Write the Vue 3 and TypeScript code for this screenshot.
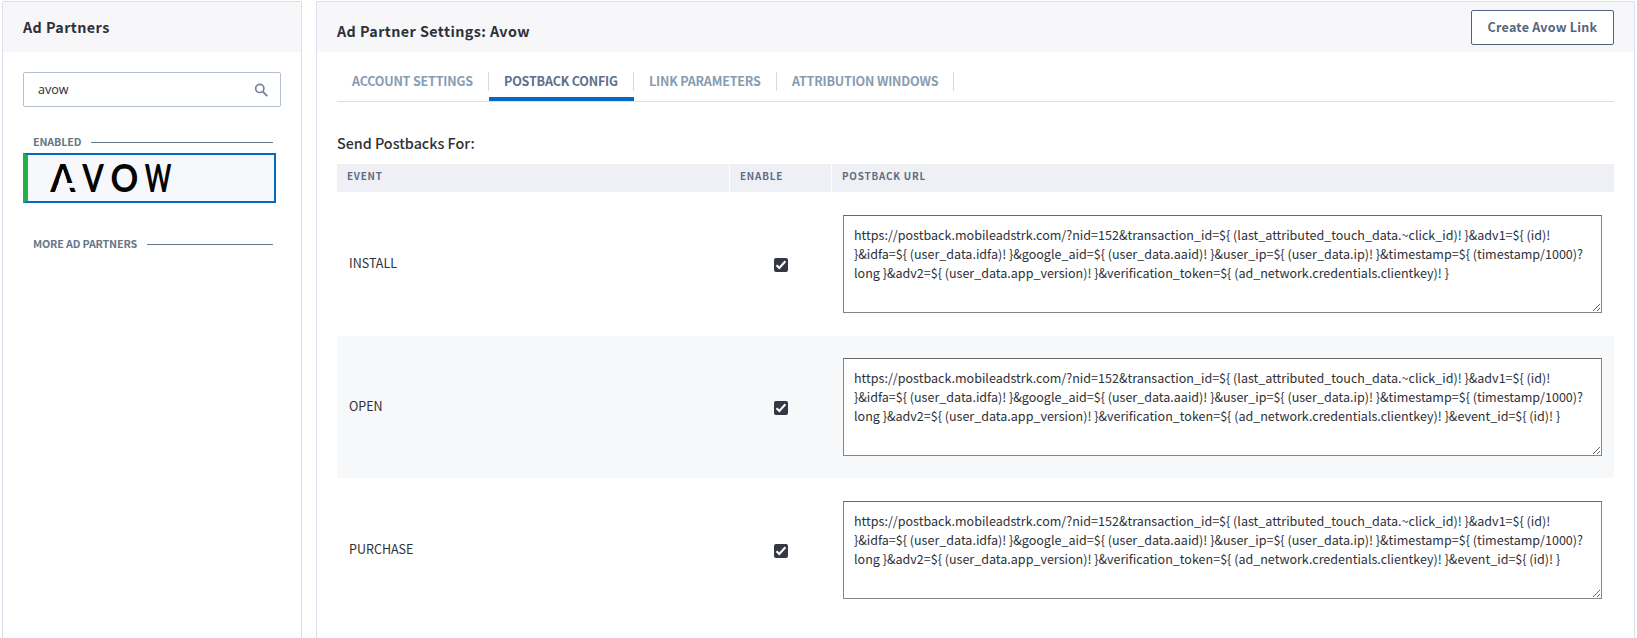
<script setup lang="ts">
import { ref } from 'vue'

interface PostbackRow {
  event: string
  enabled: boolean
  url: string
}

const search = ref('avow')
const tabs = ['ACCOUNT SETTINGS', 'POSTBACK CONFIG', 'LINK PARAMETERS', 'ATTRIBUTION WINDOWS']
const activeTab = ref(1)

const baseUrl =
  'https://postback.mobileadstrk.com/?nid=152&transaction_id=${ (last_attributed_touch_data.~click_id)! }&adv1=${ (id)! }&idfa=${ (user_data.idfa)! }&google_aid=${ (user_data.aaid)! }&user_ip=${ (user_data.ip)! }&timestamp=${ (timestamp/1000)?long }&adv2=${ (user_data.app_version)! }&verification_token=${ (ad_network.credentials.clientkey)! }'
const eventUrl = baseUrl + '&event_id=${ (id)! }'

const rows = ref<PostbackRow[]>([
  { event: 'INSTALL', enabled: true, url: baseUrl },
  { event: 'OPEN', enabled: true, url: eventUrl },
  { event: 'PURCHASE', enabled: true, url: eventUrl },
])
</script>

<template>
  <div class="page">
    <aside class="panel sidebar">
      <header class="panel-head">
        <h2 class="title">Ad Partners</h2>
      </header>
      <div class="sidebar-body">
        <label class="search">
          <input v-model="search" class="search-input" type="text" spellcheck="false" />
          <svg class="search-icon" width="15" height="15" viewBox="0 0 15 15" aria-hidden="true">
            <circle cx="5.8" cy="5.4" r="4.1" fill="none" stroke="#77839a" stroke-width="1.7" />
            <path d="M8.8 8.6 L13.3 13.1" fill="none" stroke="#77839a" stroke-width="2" />
          </svg>
        </label>
        <div class="group enabled"><span>ENABLED</span><i class="rule"></i></div>
        <div class="partner">
          <svg class="logo" width="124" height="48" viewBox="49 153 124 48" role="img" aria-label="AVOW">
            <text x="50.3" y="192" textLength="25.2" lengthAdjust="spacingAndGlyphs">A</text>
            <polygon class="cut" points="62.9,169 55,193 70.8,193" />
            <rect class="cut" x="64" y="183" width="12" height="4.8" />
            <text x="82.2" y="192" textLength="21.6" lengthAdjust="spacingAndGlyphs">V</text>
            <text x="110.6" y="192" textLength="27.8" lengthAdjust="spacingAndGlyphs">O</text>
            <text x="144.8" y="192" textLength="26.6" lengthAdjust="spacingAndGlyphs">W</text>
          </svg>
        </div>
        <div class="group more"><span>MORE AD PARTNERS</span><i class="rule"></i></div>
      </div>
    </aside>

    <main class="panel settings">
      <header class="panel-head">
        <h2 class="title settings-title">Ad Partner Settings: Avow</h2>
        <button class="create" type="button">Create Avow Link</button>
      </header>
      <div class="settings-body">
        <nav class="tabs">
          <a
            v-for="(tab, i) in tabs"
            :key="tab"
            class="tab"
            :class="{ active: i === activeTab }"
            @click="activeTab = i"
          ><span class="tab-label">{{ tab }}</span></a>
        </nav>
        <h3 class="subtitle">Send Postbacks For:</h3>
        <div class="grid head">
          <div>EVENT</div>
          <div>ENABLE</div>
          <div>POSTBACK URL</div>
        </div>
        <div v-for="row in rows" :key="row.event" class="grid row">
          <div class="event">{{ row.event }}</div>
          <label class="check">
            <input v-model="row.enabled" type="checkbox" />
            <span class="box">
              <svg v-if="row.enabled" width="14" height="14" viewBox="0 0 14 14" aria-hidden="true">
                <path d="M2.5 7.2 L5.3 9.9 L11.4 3.2" fill="none" stroke="#fff" stroke-width="2.1" />
              </svg>
            </span>
          </label>
          <textarea v-model="row.url" class="url" spellcheck="false"></textarea>
        </div>
      </div>
    </main>
  </div>
</template>

<style>
body {
  margin: 0;
  background: #fff;
  overflow: hidden;
}
</style>

<style scoped>
.page {
  box-sizing: border-box;
  height: 638px;
  padding: 1px 2px 0;
  display: flex;
  gap: 14px;
  overflow: hidden;
  color: #2e3138;
  font-family: "Noto Sans CJK SC", "Open Sans", sans-serif;
  font-size: 12.53px;
}
.panel {
  box-sizing: border-box;
  border: 1px solid #dae0e9;
  border-bottom: 0;
  border-radius: 2px 2px 0 0;
  background: #fff;
}
.sidebar { width: 300px; flex: none; }
.settings { width: 1319px; flex: none; }
.panel-head {
  height: 50px;
  padding: 0 20px;
  display: flex;
  align-items: center;
  justify-content: space-between;
  background: #f7f7fa;
}
.title {
  margin: 0;
  font-size: 14.32px;
  line-height: 20px;
  font-weight: 700;
  letter-spacing: 0.42px;
}
.settings-title { padding-top: 8px; }
.create {
  box-sizing: border-box;
  width: 143px;
  height: 35px;
  margin-top: 1px;
  padding: 0 0 2px;
  border: 1px solid #53627c;
  border-radius: 2px;
  background: #fff;
  color: #56657e;
  font-family: inherit;
  font-size: 12.53px;
  font-weight: 700;
  letter-spacing: 0.25px;
}
.sidebar-body { padding: 20px 20px 0; }
.search {
  box-sizing: border-box;
  width: 258px;
  height: 35px;
  padding: 0 11px 0 14px;
  display: flex;
  align-items: center;
  justify-content: space-between;
  border: 1px solid #b4bfce;
  border-radius: 2px;
}
.search-input {
  width: 180px;
  height: 20px;
  padding: 0;
  margin: 1px 0 0;
  border: 0;
  outline: 0;
  background: transparent;
  color: #2a2d34;
  font: 400 12.6px/20px "Open Sans", sans-serif;
}
.search-icon { flex: none; margin-top: 2px; }
.group {
  height: 20px;
  padding: 0 3px 0 10px;
  width: 240px;
  display: flex;
  align-items: center;
  gap: 10px;
  color: #677789;
  font-size: 10.74px;
  line-height: 20px;
  font-weight: 700;
  letter-spacing: -0.16px;
  white-space: nowrap;
}
.enabled { margin-top: 25px; }
.more { margin-top: 31px; }
.rule {
  flex: 1;
  height: 1px;
  margin-top: 1px;
  background: #677789;
}
.partner {
  box-sizing: border-box;
  width: 253px;
  height: 50px;
  margin-top: 1px;
  padding-left: 21px;
  border: 2px solid #0369c3;
  border-left: 5px solid #22b04c;
  background: #f7f8fc;
}
.logo {
  display: block;
  margin-top: -2px;
  overflow: visible;
  font-family: Lato, sans-serif;
  font-size: 38.6px;
  font-weight: 700;
  fill: #050505;
}
.cut { fill: #f7f8fc; }
.settings-body { padding: 20px 20px 0; }
.tabs {
  height: 29px;
  display: grid;
  grid-template-columns: 152px 145px 143px 177px;
  border-bottom: 1px solid #d8dfe8;
}
.tab {
  box-sizing: border-box;
  height: 29px;
  border-bottom: 4px solid transparent;
  color: #879cb2;
  font-weight: 700;
  letter-spacing: -0.18px;
  white-space: nowrap;
  cursor: pointer;
}
.tab-label {
  box-sizing: border-box;
  display: block;
  height: 19px;
  line-height: 18px;
  padding-left: 15px;
  border-right: 1px solid #d3dbe5;
}
.tab.active {
  color: #5e6f89;
  border-bottom-color: #0369c3;
}
.subtitle {
  margin: 31px 0 11px;
  font-size: 14.32px;
  line-height: 20px;
  font-weight: 500;
}
.grid {
  display: grid;
  grid-template-columns: 392px 101px 782px;
  column-gap: 1px;
}
.head > div {
  box-sizing: border-box;
  height: 28px;
  padding: 0 10px 4px;
  display: flex;
  align-items: center;
  background: #eff0f6;
  color: #626b82;
  font-size: 9.85px;
  font-weight: 700;
  letter-spacing: 0.8px;
}
.row {
  height: 142px;
  margin-top: 1px;
  align-items: center;
}
.row:nth-child(odd) { background: #f7f8fa; }
.event { padding: 0 0 3px 12px; }
.check {
  display: flex;
  justify-content: center;
  padding: 2px 0 0 1px;
}
.check input {
  width: 0;
  height: 0;
  margin: 0;
  appearance: none;
}
.box {
  width: 14px;
  height: 14px;
  border-radius: 2px;
  background: #353743;
}
.box svg { display: block; }
.url {
  box-sizing: border-box;
  width: 759px;
  height: 98px;
  margin: 0 0 0 11px;
  padding: 9px 10px;
  border: 1px solid #858585;
  border-top-color: #686868;
  border-radius: 0;
  outline: 0;
  background: #fff;
  color: #2e3138;
  font: 400 12.54px/19px "Noto Sans CJK SC", "Open Sans", sans-serif;
  resize: both;
}
</style>
